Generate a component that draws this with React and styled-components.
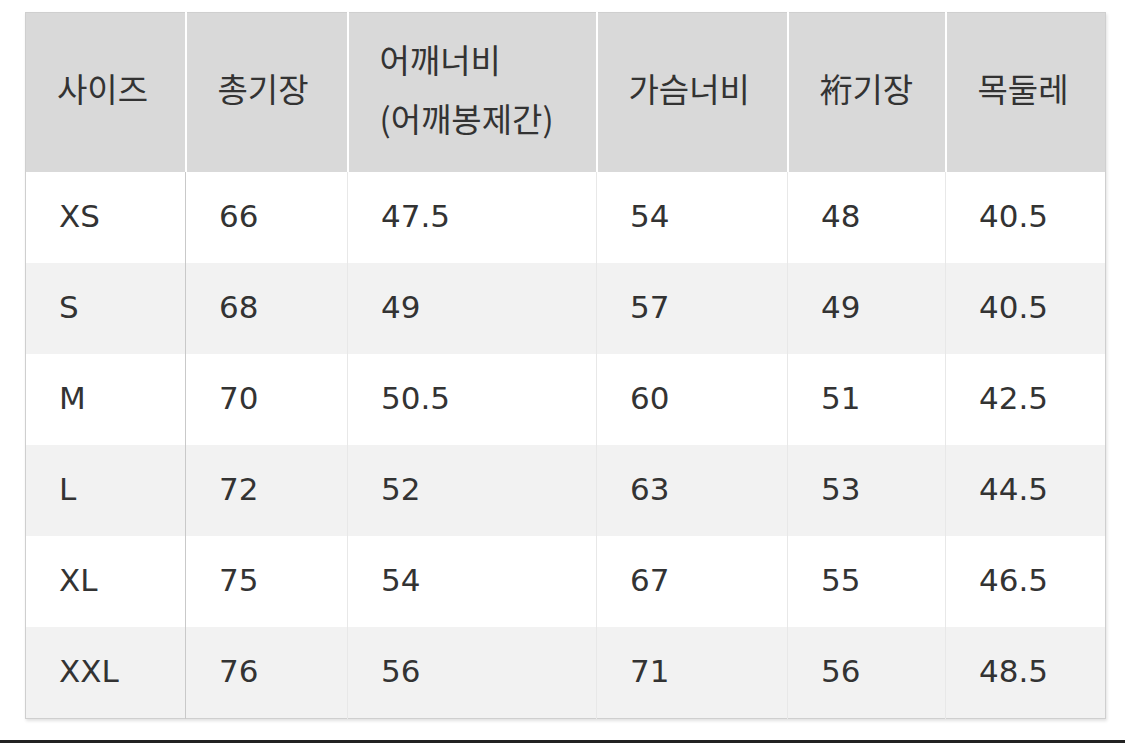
import React from 'react'
import styled, { createGlobalStyle } from 'styled-components'

const GlobalStyle = createGlobalStyle`
  html, body {
    margin: 0;
    padding: 0;
    background: #fff;
  }
`

const Page = styled.div`
  display: flex;
  flex-direction: column;
  height: 100vh;
  font-family: "DejaVu Sans", "Noto Sans CJK KR", sans-serif;
  color: #333;
`

const Frame = styled.div`
  padding: 12px 20px 0 25px;
`

const Table = styled.table`
  width: 1080px;
  border-collapse: collapse;
  table-layout: fixed;
  border: 1px solid #cfcfcf;
  box-shadow: 1px 2px 3px rgba(0, 0, 0, 0.12);
`

const HeadCell = styled.th`
  height: 151px;
  padding: 0 0 8px 31px;
  background: #d9d9d9;
  font-family: "Noto Sans CJK KR", sans-serif;
  font-size: 33px;
  font-weight: 400;
  line-height: 59px;
  text-align: left;
  color: #333;
  border-right: 2px solid #fff;

  &:last-child {
    border-right: none;
  }
`

const Row = styled.tr`
  background: ${p => (p.$shade ? '#f2f2f2' : '#fff')};
`

const Cell = styled.td`
  height: 87px;
  padding: 0 0 4px 33px;
  font-size: 31px;
  border-right: 1px solid ${p => (p.$strong ? '#c9c9c9' : '#e8e8e8')};

  &:last-child {
    border-right: none;
  }
`

const Rule = styled.div`
  margin-top: auto;
  height: 3px;
  background: #222;
`

const columns = [
  { width: 160, label: ['사이즈'] },
  { width: 162, label: ['총기장'] },
  { width: 249, label: ['어깨너비', '(어깨봉제간)'] },
  { width: 191, label: ['가슴너비'] },
  { width: 158, label: ['裄기장'] },
  { width: 160, label: ['목둘레'] },
]

const rows = [
  ['XS', '66', '47.5', '54', '48', '40.5'],
  ['S', '68', '49', '57', '49', '40.5'],
  ['M', '70', '50.5', '60', '51', '42.5'],
  ['L', '72', '52', '63', '53', '44.5'],
  ['XL', '75', '54', '67', '55', '46.5'],
  ['XXL', '76', '56', '71', '56', '48.5'],
]

export default function App() {
  return (
    <Page>
      <GlobalStyle />
      <Frame>
        <Table>
          <colgroup>
            {columns.map((c, i) => (
              <col key={i} style={{ width: c.width }} />
            ))}
          </colgroup>
          <thead>
            <tr>
              {columns.map((c, i) => (
                <HeadCell key={i}>
                  {c.label.map((line, j) => (
                    <div key={j}>{line}</div>
                  ))}
                </HeadCell>
              ))}
            </tr>
          </thead>
          <tbody>
            {rows.map((r, i) => (
              <Row key={r[0]} $shade={i % 2 === 1}>
                {r.map((v, j) => (
                  <Cell key={j} $strong={j === 0}>
                    {v}
                  </Cell>
                ))}
              </Row>
            ))}
          </tbody>
        </Table>
      </Frame>
      <Rule />
    </Page>
  )
}
